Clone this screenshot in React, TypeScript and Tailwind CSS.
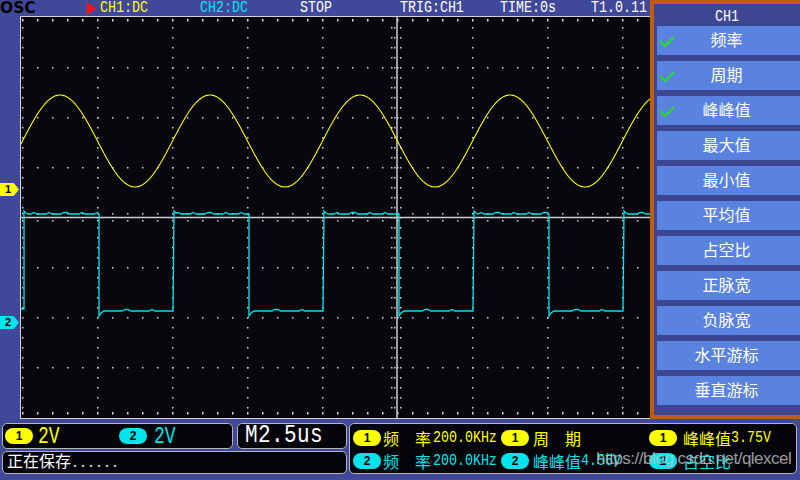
import type { ReactNode } from "react";

const YELLOW = "#ffff00";
const CYAN = "#00e4ec";

const MENU = [
  { label: "频率", checked: true },
  { label: "周期", checked: true },
  { label: "峰峰值", checked: true },
  { label: "最大值" },
  { label: "最小值" },
  { label: "平均值" },
  { label: "占空比" },
  { label: "正脉宽" },
  { label: "负脉宽" },
  { label: "水平游标" },
  { label: "垂直游标" },
];

// tall narrow bitmap-ish latin text
function Tall({ children, className = "" }: { children: ReactNode; className?: string }) {
  return <span className={`inline-block origin-center scale-y-[1.25] ${className}`}>{children}</span>;
}

function Pill({ n, color }: { n: string; color: string }) {
  return (
    <span
      className="flex h-[16px] w-[28px] shrink-0 items-center justify-center rounded-full font-['Liberation_Sans',sans-serif] text-[12px] font-bold text-black"
      style={{ background: color }}
    >
      {n}
    </span>
  );
}

function Check() {
  return (
    <svg width="16" height="13" viewBox="0 0 16 13" className="absolute left-[2px] top-[9px]">
      <polyline points="1,6 6,11 15,2" fill="none" stroke="#22e022" strokeWidth="2" />
    </svg>
  );
}

function Screen() {
  const dots: ReactNode[] = [];
  const cols = [22, 97, 172, 247, 322, 472, 547, 622];
  const rows = [67, 117, 167, 267, 317, 367];
  for (const x of cols)
    for (let y = 27; y < 412; y += 10) dots.push(<rect key={`c${x}-${y}`} x={x} y={y} width={1.5} height={1.5} />);
  for (const y of rows)
    for (let x = 37; x < 650; x += 15) dots.push(<rect key={`r${x}-${y}`} x={x} y={y} width={1.5} height={1.5} />);
  for (let x = 22; x < 650; x += 15) {
    dots.push(<rect key={`t${x}`} x={x} y={19} width={1.5} height={2.5} />);
    dots.push(<rect key={`b${x}`} x={x} y={412} width={1.5} height={2.5} />);
    dots.push(<rect key={`hu${x}`} x={x} y={213} width={1.5} height={1.5} />);
    dots.push(<rect key={`hd${x}`} x={x} y={220} width={1.5} height={1.5} />);
  }
  for (let y = 27; y < 412; y += 10) {
    dots.push(<rect key={`vl${y}`} x={391} y={y} width={1.5} height={1.5} />);
    dots.push(<rect key={`vm${y}`} x={394} y={y} width={1.5} height={1.5} />);
    dots.push(<rect key={`vr${y}`} x={400} y={y} width={1.5} height={1.5} />);
  }

  let sine = "";
  for (let x = 21; x <= 650; x++) {
    const y = 141 - 46 * Math.cos((2 * Math.PI * (x - 60)) / 150);
    sine += `${x === 21 ? "M" : "L"}${x} ${y.toFixed(1)} `;
  }

  let sq = "M21 309 L24 309 ";
  for (let k = 0; k < 5; k++) {
    const r = 24 + 150 * k;
    const f = 99 + 150 * k;
    if (r > 650) break;
    sq += `L${r} 211 L${r + 2} 213 `;
    for (let x = r + 4; x < Math.min(f, 650); x += 3) {
      const y = Math.floor(x / 4) % 4 === 0 ? 212.5 : 214;
      sq += `L${x} ${y} `;
    }
    if (f > 650) {
      sq += `L650 214`;
      break;
    }
    sq += `L${f} 214 L${f} 316 L${f + 2} 313 L${f + 5} 311 `;
    for (let x = f + 8; x < r + 150; x += 3) {
      const y = Math.floor(x / 5) % 5 === 0 ? 309.5 : 311;
      sq += `L${x} ${y} `;
    }
  }

  return (
    <div className="h-[403px] w-[630px] border-b border-l border-t border-[#d4d4d4] bg-[#07070d]">
      <svg width="629" height="401" viewBox="21 17 629 401" className="block">
        <g fill="#d8d8d8">{dots}</g>
        <line x1="21" y1="217.5" x2="650" y2="217.5" stroke="#cfcfcf" strokeWidth="1.5" />
        <line x1="397" y1="17" x2="397" y2="418" stroke="#cfcfcf" strokeWidth="1.5" />
        <path d={sine} fill="none" stroke={YELLOW} strokeWidth="1.1" />
        <path d={sq} fill="none" stroke={CYAN} strokeWidth="1.3" />
      </svg>
    </div>
  );
}

function Marker({ n, color, top }: { n: string; color: string; top: string }) {
  return (
    <div
      className={`absolute left-0 ${top} flex h-[13px] w-[19px] items-center pl-[5px] font-['Liberation_Sans',sans-serif] text-[11px] font-bold text-black [clip-path:polygon(0_0,72%_0,100%_50%,72%_100%,0_100%)]`}
      style={{ background: color }}
    >
      {n}
    </div>
  );
}

export default function App() {
  return (
    <div className="relative h-[480px] w-[800px] overflow-hidden bg-[#404999] font-['Liberation_Mono','Noto_Sans_CJK_SC',monospace] text-white">
      <div className="flex">
        {/* scope area */}
        <div className="w-[650px]">
          <div className="flex h-[16px] items-center text-[13.3px] leading-[16px]">
            <div className="w-[87px] font-['DejaVu_Sans',sans-serif] text-[15.5px] font-bold leading-[16px] text-black">
              OSC
            </div>
            <div className="w-[13px]">
              <svg width="9" height="13" viewBox="0 0 9 13" className="block">
                <polygon points="0,0 9,6.5 0,13" fill="#ff1010" />
              </svg>
            </div>
            <div className="w-[100px] text-[#ffff00]"><Tall>CH1:DC</Tall></div>
            <div className="w-[100px] text-[#00e4ec]"><Tall>CH2:DC</Tall></div>
            <div className="w-[100px]"><Tall>STOP</Tall></div>
            <div className="w-[100px]"><Tall>TRIG:CH1</Tall></div>
            <div className="w-[91px]"><Tall>TIME:0s</Tall></div>
            <div className="w-[59px]"><Tall>T1.0.11</Tall></div>
          </div>
          <div className="flex">
            <div className="relative h-[403px] w-[20px]">
              <Marker n="1" color={YELLOW} top="top-[167px]" />
              <Marker n="2" color={CYAN} top="top-[300px]" />
            </div>
            <Screen />
          </div>
        </div>

        {/* measure menu */}
        <div className="flex h-[419px] w-[150px] flex-col border-b-4 border-l-4 border-t-4 border-[#c25c10] bg-[#3d4693] pl-[3px]">
          <div className="h-[22px] pr-[3px] pt-[2px] text-center text-[13.3px] leading-[22px]"><Tall>CH1</Tall></div>
          <div className="flex flex-col gap-[6px]">
            {MENU.map((m) => (
              <div
                key={m.label}
                className="relative flex h-[29px] items-center justify-center bg-[#5a82df] pb-[3px] pr-[4px] font-['Noto_Sans_CJK_SC',sans-serif] text-[16px]"
              >
                {m.checked && <Check />}
                {m.label}
              </div>
            ))}
          </div>
        </div>
      </div>

      {/* status */}
      <div className="flex gap-[2px] px-[2px] pt-[4px]">
        <div className="flex w-[345px] flex-col gap-[2px]">
          <div className="flex gap-[4px]">
            <div className="flex h-[26px] w-[231px] items-center rounded-[5px] border border-[#b4b4bc] bg-[#04040b] pl-[2px]">
              <div className="flex w-[114px] items-center gap-[5px]">
                <Pill n="1" color={YELLOW} />
                <span className="text-[18px] leading-[20px] text-[#ffff00]"><Tall className="scale-y-[1.35]">2V</Tall></span>
              </div>
              <div className="flex items-center gap-[7px]">
                <Pill n="2" color={CYAN} />
                <span className="text-[18px] leading-[20px] text-[#00e4ec]"><Tall className="scale-y-[1.35]">2V</Tall></span>
              </div>
            </div>
            <div className="flex h-[26px] w-[110px] items-center rounded-[5px] border border-[#b4b4bc] bg-[#04040b] pl-[7px] text-[21px] leading-[22px] tracking-[0.4px]">
              <Tall className="scale-y-[1.2]">M2.5us</Tall>
            </div>
          </div>
          <div className="flex h-[23px] w-[345px] items-center rounded-[5px] border border-[#b4b4bc] bg-[#04040b] pb-[2px] pl-[4px]">
            <span className="text-[16px] leading-[20px]">
              <span className="font-['Noto_Sans_CJK_SC',sans-serif]">正在保存</span>
              <span className="text-[13.3px]">......</span>
            </span>
          </div>
        </div>

        <div className="relative flex h-[51px] w-[448px] flex-col justify-center gap-[3px] rounded-[5px] border border-[#b4b4bc] bg-[#04040b] pb-[3px] pl-[3px]">
          <div className="grid h-[20px] grid-cols-[148px_148px_148px] items-center text-[#ffff00]">
            <div className="flex items-center">
              <Pill n="1" color={YELLOW} />
              <span className="ml-[2px] font-['Noto_Sans_CJK_SC',sans-serif] text-[16px]">频　率</span>
              <span className="ml-[2px] text-[13.3px]"><Tall>200.0KHz</Tall></span>
            </div>
            <div className="flex items-center">
              <Pill n="1" color={YELLOW} />
              <span className="ml-[4px] font-['Noto_Sans_CJK_SC',sans-serif] text-[16px]">周　期</span>
            </div>
            <div className="flex items-center">
              <Pill n="1" color={YELLOW} />
              <span className="ml-[6px] font-['Noto_Sans_CJK_SC',sans-serif] text-[16px]">峰峰值</span>
              <span className="text-[13.3px]"><Tall>3.75V</Tall></span>
            </div>
          </div>
          <div className="grid h-[20px] grid-cols-[148px_148px_148px] items-center text-[#00e4ec]">
            <div className="flex items-center">
              <Pill n="2" color={CYAN} />
              <span className="ml-[2px] font-['Noto_Sans_CJK_SC',sans-serif] text-[16px]">频　率</span>
              <span className="ml-[2px] text-[13.3px]"><Tall>200.0KHz</Tall></span>
            </div>
            <div className="flex items-center">
              <Pill n="2" color={CYAN} />
              <span className="ml-[4px] font-['Noto_Sans_CJK_SC',sans-serif] text-[16px]">峰峰值</span>
              <span className="text-[13.3px]"><Tall>4.56V</Tall></span>
            </div>
            <div className="flex items-center">
              <Pill n="2" color={CYAN} />
              <span className="ml-[6px] font-['Noto_Sans_CJK_SC',sans-serif] text-[16px]">占空比</span>
            </div>
          </div>
          <div className="pointer-events-none absolute left-[246px] top-[24px] font-['Liberation_Sans',sans-serif] text-[17px] leading-[22px] tracking-[-0.5px] text-[#c4c4c4]/80">
            https://blog.csdn.net/qlexcel
          </div>
        </div>
      </div>
    </div>
  );
}
